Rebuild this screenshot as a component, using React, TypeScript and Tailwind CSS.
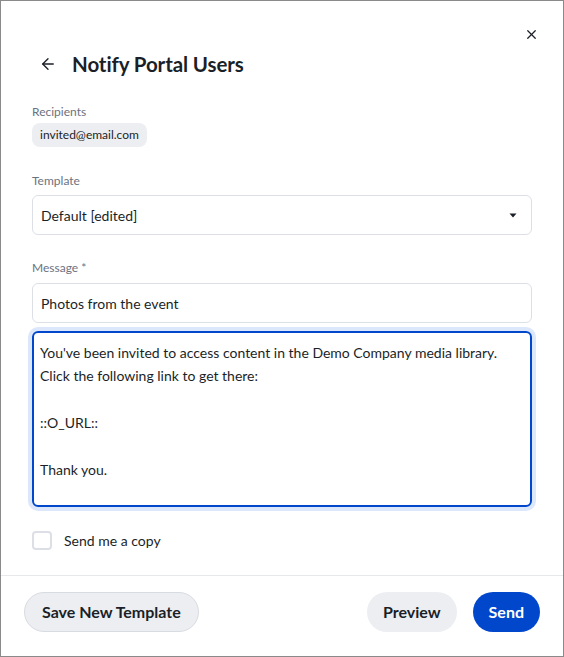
import React from "react";
import { ArrowLeft, X } from "lucide-react";

export default function App() {
  const font = { fontFamily: "Lato, 'Noto Sans', sans-serif" };
  return (
    <div
      className="w-[564px] h-[657px] border border-[#8a8a8a] bg-white flex flex-col text-[#1b1f27] overflow-hidden"
      style={font}
    >
      <div className="flex justify-end pt-[24px] pr-[23px] h-[42px]">
        <button className="w-[18px] h-[18px] flex items-center justify-center text-[#1b1f27]">
          <X size={15} strokeWidth={2} />
        </button>
      </div>
      <div className="flex items-center h-[28px] mt-[7px] pl-[31px]">
        <button className="w-[32px] h-[28px] flex items-center justify-center">
          <ArrowLeft size={18} strokeWidth={1.8} />
        </button>
        <h1 className="ml-[8px] text-[20.5px] font-bold tracking-[-0.1px]">Notify Portal Users</h1>
      </div>

      <div className="px-[31px] flex flex-col">
        <div className="mt-[26px] h-[16px] text-[12px] leading-[16px] text-[#6b7280]">Recipients</div>
        <div className="mt-[3px] flex">
          <span className="h-[24px] px-[8px] rounded-lg bg-[#eceef2] text-[12px] leading-[24px]">
            invited@email.com
          </span>
        </div>

        <div className="mt-[26px] h-[16px] text-[12px] leading-[16px] text-[#6b7280]">Template</div>
        <div className="mt-[6px] h-[40px] rounded-md border border-[#dcdfe5] flex items-center justify-between pl-[8px] pr-[14px]">
          <span className="text-[14px]">Default [edited]</span>
          <svg width="8" height="5" viewBox="0 0 8 5">
            <path d="M0.5 0.5 L7.5 0.5 L4 4.5 Z" fill="#1b1f27" />
          </svg>
        </div>

        <div className="mt-[25px] h-[16px] text-[12px] leading-[16px] text-[#6b7280]">Message *</div>
        <div className="mt-[7px] h-[40px] rounded-md border border-[#dcdfe5] flex items-center pl-[8px]">
          <span className="text-[14px]">Photos from the event</span>
        </div>

        <div className="mt-[8px] h-[176px] rounded-md border-2 border-[#0047cc] ring-4 ring-[#dde7fb] px-[6px] pt-[8px] text-[14px] leading-[23.4px] whitespace-pre-line">
          {"You've been invited to access content in the Demo Company media library.\nClick the following link to get there:\n\n::O_URL::\n\nThank you."}
        </div>

        <div className="mt-[23px] flex items-center h-[20px]">
          <span className="w-[20px] h-[19px] rounded-[4px] border-2 border-[#dcdfe5] bg-white" />
          <span className="ml-[12px] text-[14px]">Send me a copy</span>
        </div>
      </div>

      <div className="mt-[25px] border-t border-[#e6e8ec]" />

      <div className="flex items-center justify-between px-[23px] pt-[16px]">
        <button className="h-[40px] px-[17px] rounded-full bg-[#eceef2] border border-[#d8dbe1] text-[16px] font-bold">
          Save New Template
        </button>
        <div className="flex items-center gap-[16px]">
          <button className="h-[40px] px-[16px] rounded-full bg-[#eceef2] text-[16px] font-bold">Preview</button>
          <button className="h-[40px] px-[16px] rounded-full bg-[#0047cc] text-white text-[16px] font-bold">
            Send
          </button>
        </div>
      </div>
    </div>
  );
}
